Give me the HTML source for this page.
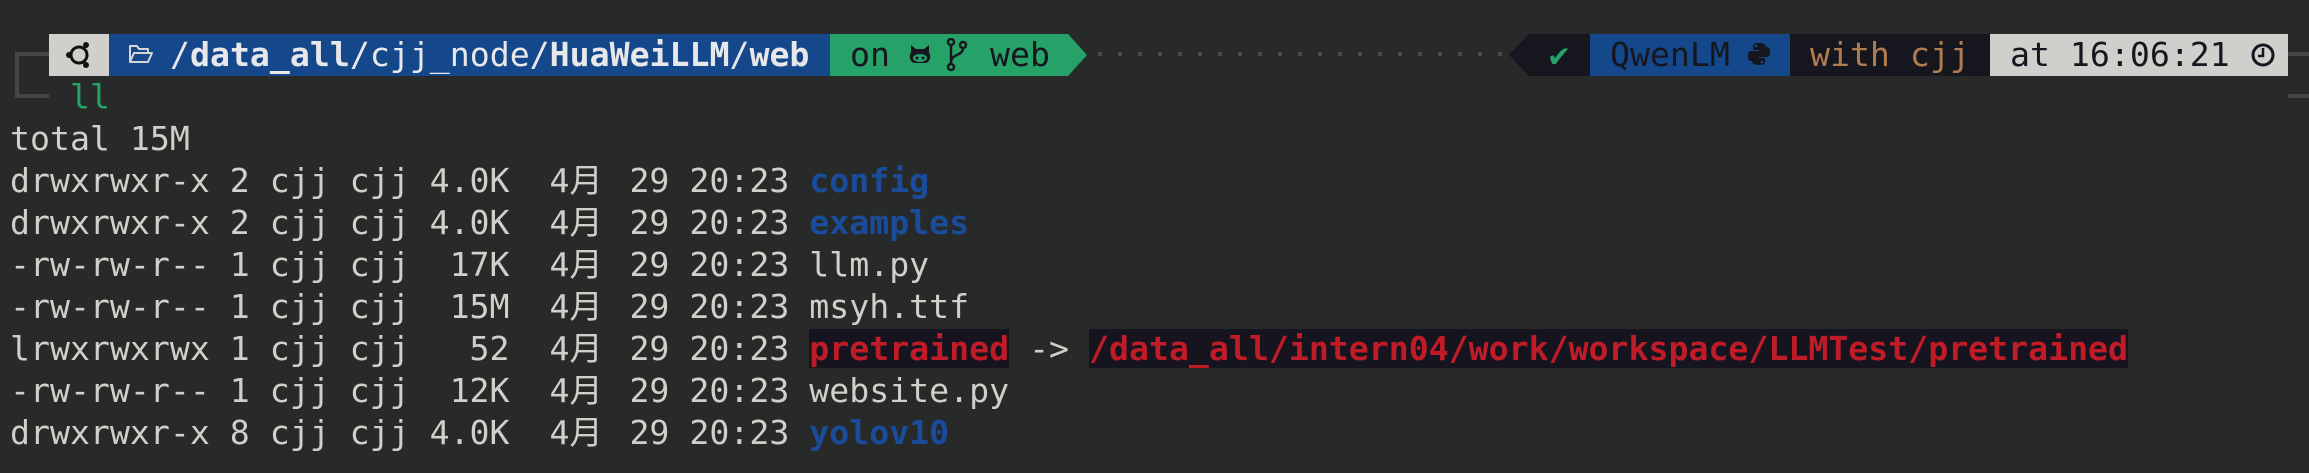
<!DOCTYPE html>
<html><head><meta charset="utf-8"><style>
html,body{margin:0;padding:0}
body{width:2309px;height:473px;background:#282a29;position:relative;overflow:hidden;font-family:"DejaVu Sans Mono","Liberation Mono","Noto Sans CJK SC",monospace;font-size:33.2px;color:#d0cfc8}
.a{position:absolute;white-space:pre;height:42px;line-height:42px}
.b{font-weight:bold}
.m{display:inline-block;width:40px;overflow:hidden;vertical-align:top;text-align:left}
svg{position:absolute}
</style></head><body>
<div style="position:absolute;left:15px;top:52px;width:34px;height:4px;background:#454745"></div>
<div style="position:absolute;left:15px;top:52px;width:4px;height:46px;background:#454745"></div>
<div style="position:absolute;left:15px;top:94px;width:34px;height:4px;background:#454745"></div>
<div style="position:absolute;left:2288px;top:52px;width:21px;height:4px;background:#454745"></div>
<div style="position:absolute;left:2288px;top:94px;width:21px;height:4px;background:#454745"></div>

<div class="a" style="left:49px;top:34px;width:60px;background:#d0cfcb"></div>
<svg style="left:64px;top:41px" width="30" height="28" viewBox="0 0 30 28"><circle cx="15" cy="14" r="8" fill="none" stroke="#111" stroke-width="3"/><circle cx="22" cy="4" r="3" fill="#111"/><circle cx="5" cy="14" r="3" fill="#111"/><circle cx="22" cy="24" r="3" fill="#111"/></svg>
<div class="a" style="left:109px;top:34px;width:721px;background:#15488a"></div>
<svg style="left:128px;top:42px" width="26" height="24" viewBox="0 0 26 24"><path d="M2 20V4h7l2 3h9v4M2 20l4-9h18l-4 9z" fill="none" stroke="#d6d6d6" stroke-width="2" stroke-linejoin="round"/></svg>
<div class="a" style="left:170px;top:34px;color:#e8e8ea">/<span class="b">data_all</span>/cjj_node/<span class="b">HuaWeiLLM</span>/<span class="b">web</span></div>
<div class="a" style="left:830px;top:34px;width:238px;background:#26a269;color:#16161f"> on</div>
<svg style="left:1068px;top:34px" width="20" height="42" viewBox="0 0 20 42"><path d="M0 0L19 21L0 42z" fill="#26a269"/></svg>
<svg style="left:908px;top:42px" width="24" height="24" viewBox="0 0 24 24"><path d="M3 3l5 4h8l5-4v8c2 2 2 8-3 10H6C1 19 1 13 3 11z" fill="#16161f"/><ellipse cx="12" cy="16" rx="7" ry="4" fill="#26a269"/><circle cx="9" cy="16" r="1.5" fill="#16161f"/><circle cx="15" cy="16" r="1.5" fill="#16161f"/></svg>
<svg style="left:946px;top:38px" width="22" height="34" viewBox="0 0 22 34"><circle cx="5" cy="4" r="3" fill="none" stroke="#16161f" stroke-width="2.5"/><circle cx="17" cy="7" r="3" fill="none" stroke="#16161f" stroke-width="2.5"/><circle cx="5" cy="29" r="3" fill="none" stroke="#16161f" stroke-width="2.5"/><path d="M5 7v19M17 10c0 8-12 6-12 14" fill="none" stroke="#16161f" stroke-width="2.5"/></svg>
<div class="a" style="left:990px;top:34px;color:#16161f">web</div>

<div style="position:absolute;left:1098px;top:52px;width:410px;height:4px;background:repeating-linear-gradient(90deg,#4a4c4a 0 4px,transparent 4px 20px)"></div>

<svg style="left:1509px;top:34px" width="20" height="42" viewBox="0 0 20 42"><path d="M20 0L0 21L20 42z" fill="#16161f"/></svg>
<div class="a" style="left:1528px;top:34px;width:62px;background:#16161f;color:#26a269;text-align:center">✔</div>
<div class="a" style="left:1590px;top:34px;width:200px;background:#15488a;color:#16161f"> QwenLM</div>
<svg style="left:1747px;top:42px" width="24" height="24" viewBox="0 0 24 24"><path d="M12 1C6 1 6 3 6 5v3h6v1H4C1 9 1 12 1 14s0 5 3 5h2v-3c0-2 2-4 4-4h6c2 0 3-1 3-3V5c0-2-2-4-7-4z" fill="#16161f"/><path d="M12 23c6 0 6-2 6-4v-3h-6v-1h8c3 0 3-3 3-5s0-5-3-5h-2v3c0 2-2 4-4 4H8c-2 0-3 1-3 3v4c0 2 2 4 7 4z" fill="#16161f"/><circle cx="9" cy="4" r="1.3" fill="#15488a"/><circle cx="15" cy="20" r="1.3" fill="#15488a"/></svg>
<div class="a" style="left:1790px;top:34px;width:200px;background:#16161f;color:#b07b4f"> with cjj</div>
<div class="a" style="left:1990px;top:34px;width:298px;background:#d0cfcb;color:#16161f"> at 16:06:21</div>
<svg style="left:2250px;top:42px" width="26" height="26" viewBox="0 0 26 26"><circle cx="13" cy="13" r="10" fill="none" stroke="#16161f" stroke-width="3"/><path d="M13 6v8h-5" fill="none" stroke="#16161f" stroke-width="2.5"/></svg>

<div class="a" style="left:70px;top:76px;color:#26a269">ll</div>
<div class="a" style="left:10px;top:118px">total 15M</div>
<div class="a" style="left:10px;top:160px">drwxrwxr-x 2 cjj cjj 4.0K  4<span class="m">月</span> 29 20:23 <span class="b" style="color:#1a4c9c">config</span></div>
<div class="a" style="left:10px;top:202px">drwxrwxr-x 2 cjj cjj 4.0K  4<span class="m">月</span> 29 20:23 <span class="b" style="color:#1a4c9c">examples</span></div>
<div class="a" style="left:10px;top:244px">-rw-rw-r-- 1 cjj cjj  17K  4<span class="m">月</span> 29 20:23 llm.py</div>
<div class="a" style="left:10px;top:286px">-rw-rw-r-- 1 cjj cjj  15M  4<span class="m">月</span> 29 20:23 msyh.ttf</div>
<div class="a" style="left:10px;top:328px">lrwxrwxrwx 1 cjj cjj   52  4<span class="m">月</span> 29 20:23 <span class="b" style="color:#c01c28;background:#16141e">pretrained</span> -&gt; <span class="b" style="color:#c01c28;background:#16141e">/data_all/intern04/work/workspace/LLMTest/pretrained</span></div>
<div class="a" style="left:10px;top:370px">-rw-rw-r-- 1 cjj cjj  12K  4<span class="m">月</span> 29 20:23 website.py</div>
<div class="a" style="left:10px;top:412px">drwxrwxr-x 8 cjj cjj 4.0K  4<span class="m">月</span> 29 20:23 <span class="b" style="color:#1a4c9c">yolov10</span></div>
</body></html>
